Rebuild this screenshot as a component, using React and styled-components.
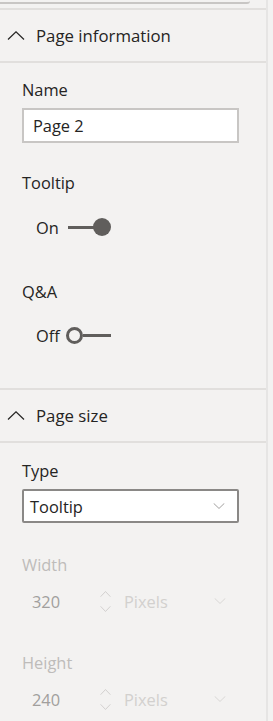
import styled, { createGlobalStyle } from "styled-components";

const Global = createGlobalStyle`
  html, body {
    margin: 0;
    padding: 0;
    background: #f3f2f1;
  }
  body {
    font-family: "Open Sans", "Noto Sans", sans-serif;
    color: #252423;
  }
`;

const Pane = styled.div`
  width: 266px;
  min-height: 721px;
  border-right: 2px solid #e6e5e4;
  box-sizing: content-box;
`;

const TopStrip = styled.div`
  height: 8px;
`;

const SearchEdge = styled.div`
  width: 250px;
  height: 2px;
  border-bottom: 2px solid #c8c6c4;
  border-bottom-right-radius: 3px;
`;

const Header = styled.div`
  display: flex;
  align-items: center;
  gap: 11px;
  height: 51px;
  padding-left: 7px;
  border-top: 2px solid #e1dfdd;
  border-bottom: 2px solid #e1dfdd;
  font-size: 16.8px;
  margin-top: ${(p) => (p.$joined ? "-2px" : "0")};
`;

const Body = styled.div`
  display: flex;
  flex-direction: column;
  padding: ${(p) => p.$pad};
`;

const Label = styled.div`
  font-size: 16.4px;
  line-height: 20px;
  height: 20px;
  color: ${(p) => (p.$disabled ? "#bebcba" : "#252423")};
  margin-top: ${(p) => p.$mt || "0"};
  margin-left: 22px;
`;

const TextBox = styled.div`
  margin: 8px 0 0 22px;
  width: 217px;
  height: 35px;
  box-sizing: border-box;
  border: 2px solid #c8c6c4;
  background: #fff;
  padding-left: 9px;
  font-size: 16.4px;
  display: flex;
  align-items: center;
`;

const Select = styled(TextBox)`
  height: 34px;
  border: 2px solid #8a8886;
  border-radius: 2px;
  padding: 0 12px 0 6px;
  justify-content: space-between;
`;

const ToggleRow = styled.div`
  display: flex;
  align-items: center;
  height: 20px;
  margin: ${(p) => p.$mt} 0 0 36px;
  font-size: 16.4px;
`;

const ToggleText = styled.span`
  width: 30px;
`;

const Switch = styled.div`
  display: flex;
  align-items: center;
  flex-direction: ${(p) => (p.$on ? "row" : "row-reverse")};
  justify-content: flex-end;
  width: 45px;
`;

const Track = styled.div`
  width: ${(p) => (p.$on ? "27px" : "28px")};
  height: 3px;
  background: #605e5c;
`;

const Knob = styled.div`
  width: ${(p) => (p.$on ? "18px" : "17px")};
  height: ${(p) => (p.$on ? "18px" : "17px")};
  border-radius: 50%;
  box-sizing: border-box;
  background: ${(p) => (p.$on ? "#605e5c" : "transparent")};
  border: ${(p) => (p.$on ? "none" : "3px solid #605e5c")};
  margin-left: ${(p) => (p.$on ? "-2px" : "0")};
`;

const SpinRow = styled.div`
  display: flex;
  align-items: center;
  height: 20px;
  margin: 16px 0 0 32px;
  font-size: 16.4px;
`;

const Value = styled.span`
  width: 68px;
  color: #a19f9d;
`;

const Spinner = styled.div`
  display: flex;
  flex-direction: column;
  gap: 9px;
  width: 24px;
  margin-top: 1px;
`;

const Unit = styled.span`
  flex: 0 0 90px;
  color: #d2d0ce;
`;

const Chevron = ({ dir = "down", color = "#252423", w = 18, h = 9 }) => (
  <svg width={w} height={h} viewBox="0 0 18 9" preserveAspectRatio="none">
    <polyline
      points={dir === "up" ? "1,8.5 9,0.8 17,8.5" : "1,0.5 9,8.2 17,0.5"}
      fill="none"
      stroke={color}
      strokeWidth="1.2"
    />
  </svg>
);

const ToggleField = ({ on, mt }) => (
  <ToggleRow $mt={mt}>
    <ToggleText>{on ? "On" : "Off"}</ToggleText>
    <Switch $on={on}>
      <Track $on={on} />
      <Knob $on={on} />
    </Switch>
  </ToggleRow>
);

const SizeField = ({ value }) => (
  <SpinRow>
    <Value>{value}</Value>
    <Spinner>
      <Chevron dir="up" color="#c8c6c4" w={11} h={6} />
      <Chevron dir="down" color="#c8c6c4" w={11} h={6} />
    </Spinner>
    <Unit>Pixels</Unit>
    <Chevron color="#d2d0ce" w={12} h={6} />
  </SpinRow>
);

export default function App() {
  return (
    <>
      <Global />
      <Pane>
        <TopStrip>
          <SearchEdge />
        </TopStrip>
        <Header>
          <Chevron dir="up" />
          Page information
        </Header>
        <Body $pad="17px 0 45px">
          <Label>Name</Label>
          <TextBox>Page 2</TextBox>
          <Label $mt="30px">Tooltip</Label>
          <ToggleField on mt="24px" />
          <Label $mt="45px">Q&amp;A</Label>
          <ToggleField mt="23px" />
        </Body>
        <Header $joined>
          <Chevron dir="up" />
          Page size
        </Header>
        <Body $pad="18px 0 0">
          <Label>Type</Label>
          <Select>
            Tooltip
            <Chevron color="#8a8886" w={12} h={6} />
          </Select>
          <Label $mt="32px" $disabled>Width</Label>
          <SizeField value="320" />
          <Label $mt="42px" $disabled>Height</Label>
          <SizeField value="240" />
        </Body>
      </Pane>
    </>
  );
}
